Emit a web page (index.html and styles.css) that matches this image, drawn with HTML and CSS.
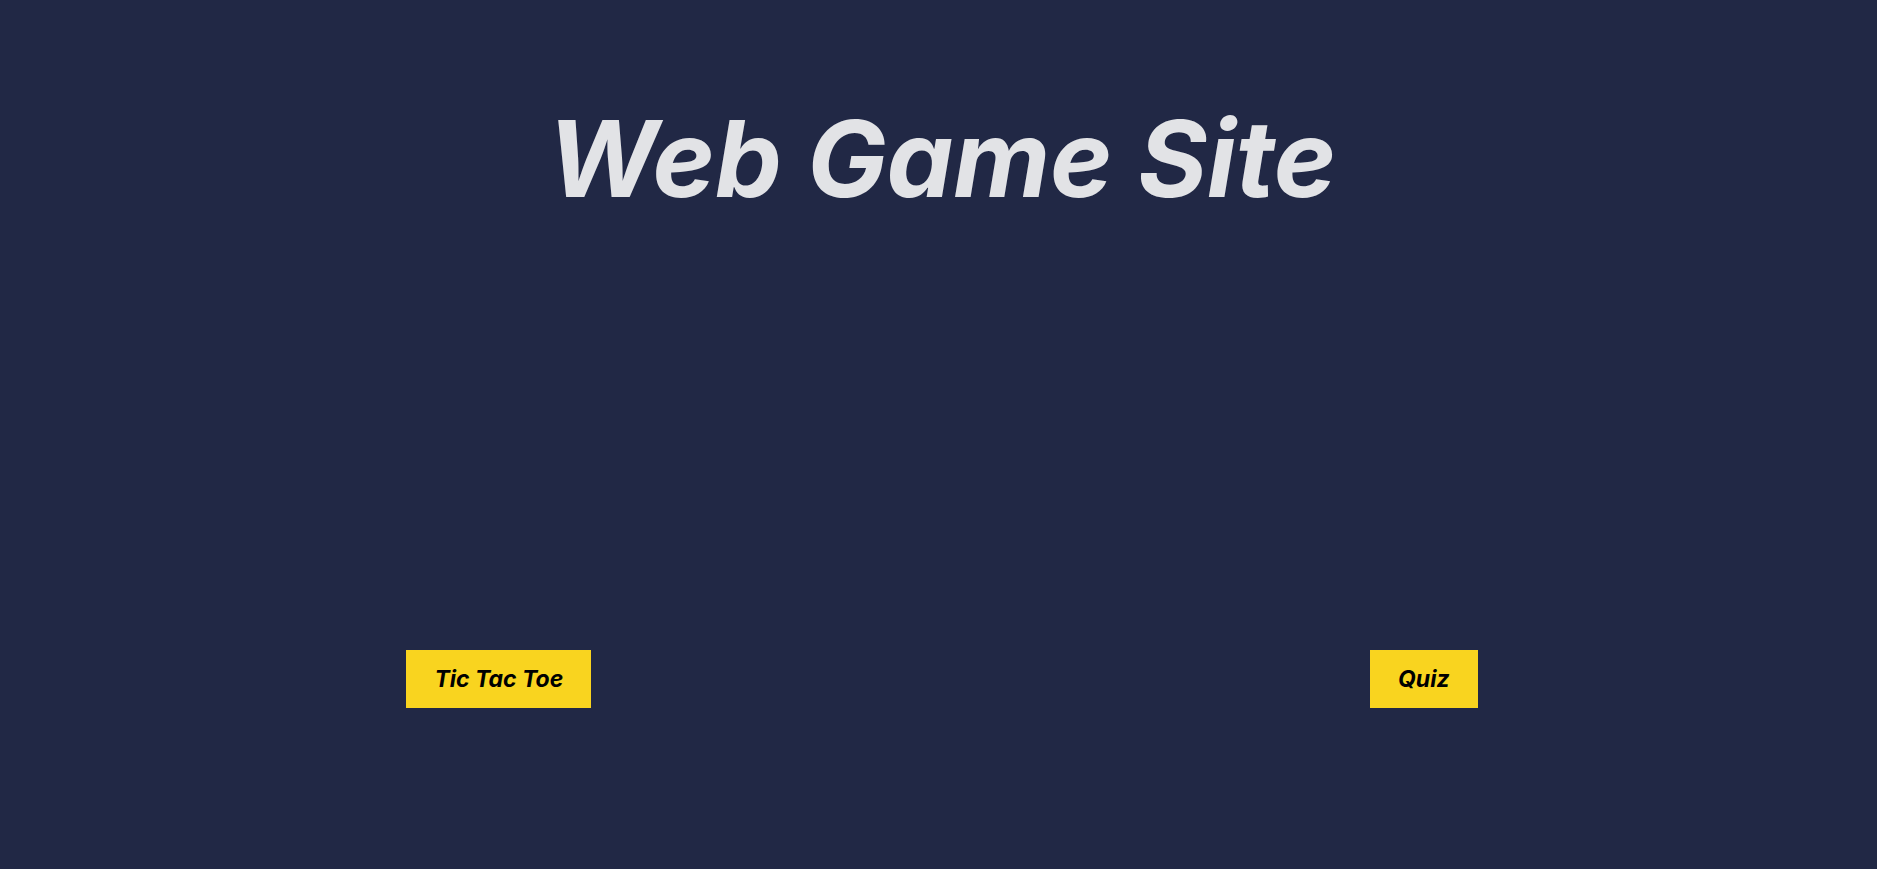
FILE: index.html
```html
<!DOCTYPE html>
<html lang="en">
<head>
<meta charset="utf-8">
<title>Web Game Site</title>
<link rel="stylesheet" href="styles.css">
</head>
<body>
<h1 class="title">Web Game Site</h1>
<nav class="games">
<a class="game" href="#tic-tac-toe">Tic Tac Toe</a>
<a class="game" href="#quiz">Quiz</a>
</nav>
</body>
</html>
```
FILE: styles.css
```css
* { box-sizing: border-box; }
body {
  margin: 0;
  min-height: 100vh;
  padding: 0 10px 0 17px;
  display: grid;
  grid-template-rows: 318px 1fr;
  background: #212845;
  font-family: Inter, sans-serif;
  font-style: italic;
  font-weight: 700;
}
.title {
  margin: 0;
  place-self: center;
  font-size: 106px;
  line-height: 132px;
  color: #e2e3e6;
}
.games {
  display: flex;
  justify-content: space-around;
  align-items: center;
  padding-top: 171px;
}
.game {
  padding: 14px 28px;
  font-size: 23px;
  line-height: 30px;
  color: #000;
  background: #f9d41f;
  text-decoration: none;
}
```
